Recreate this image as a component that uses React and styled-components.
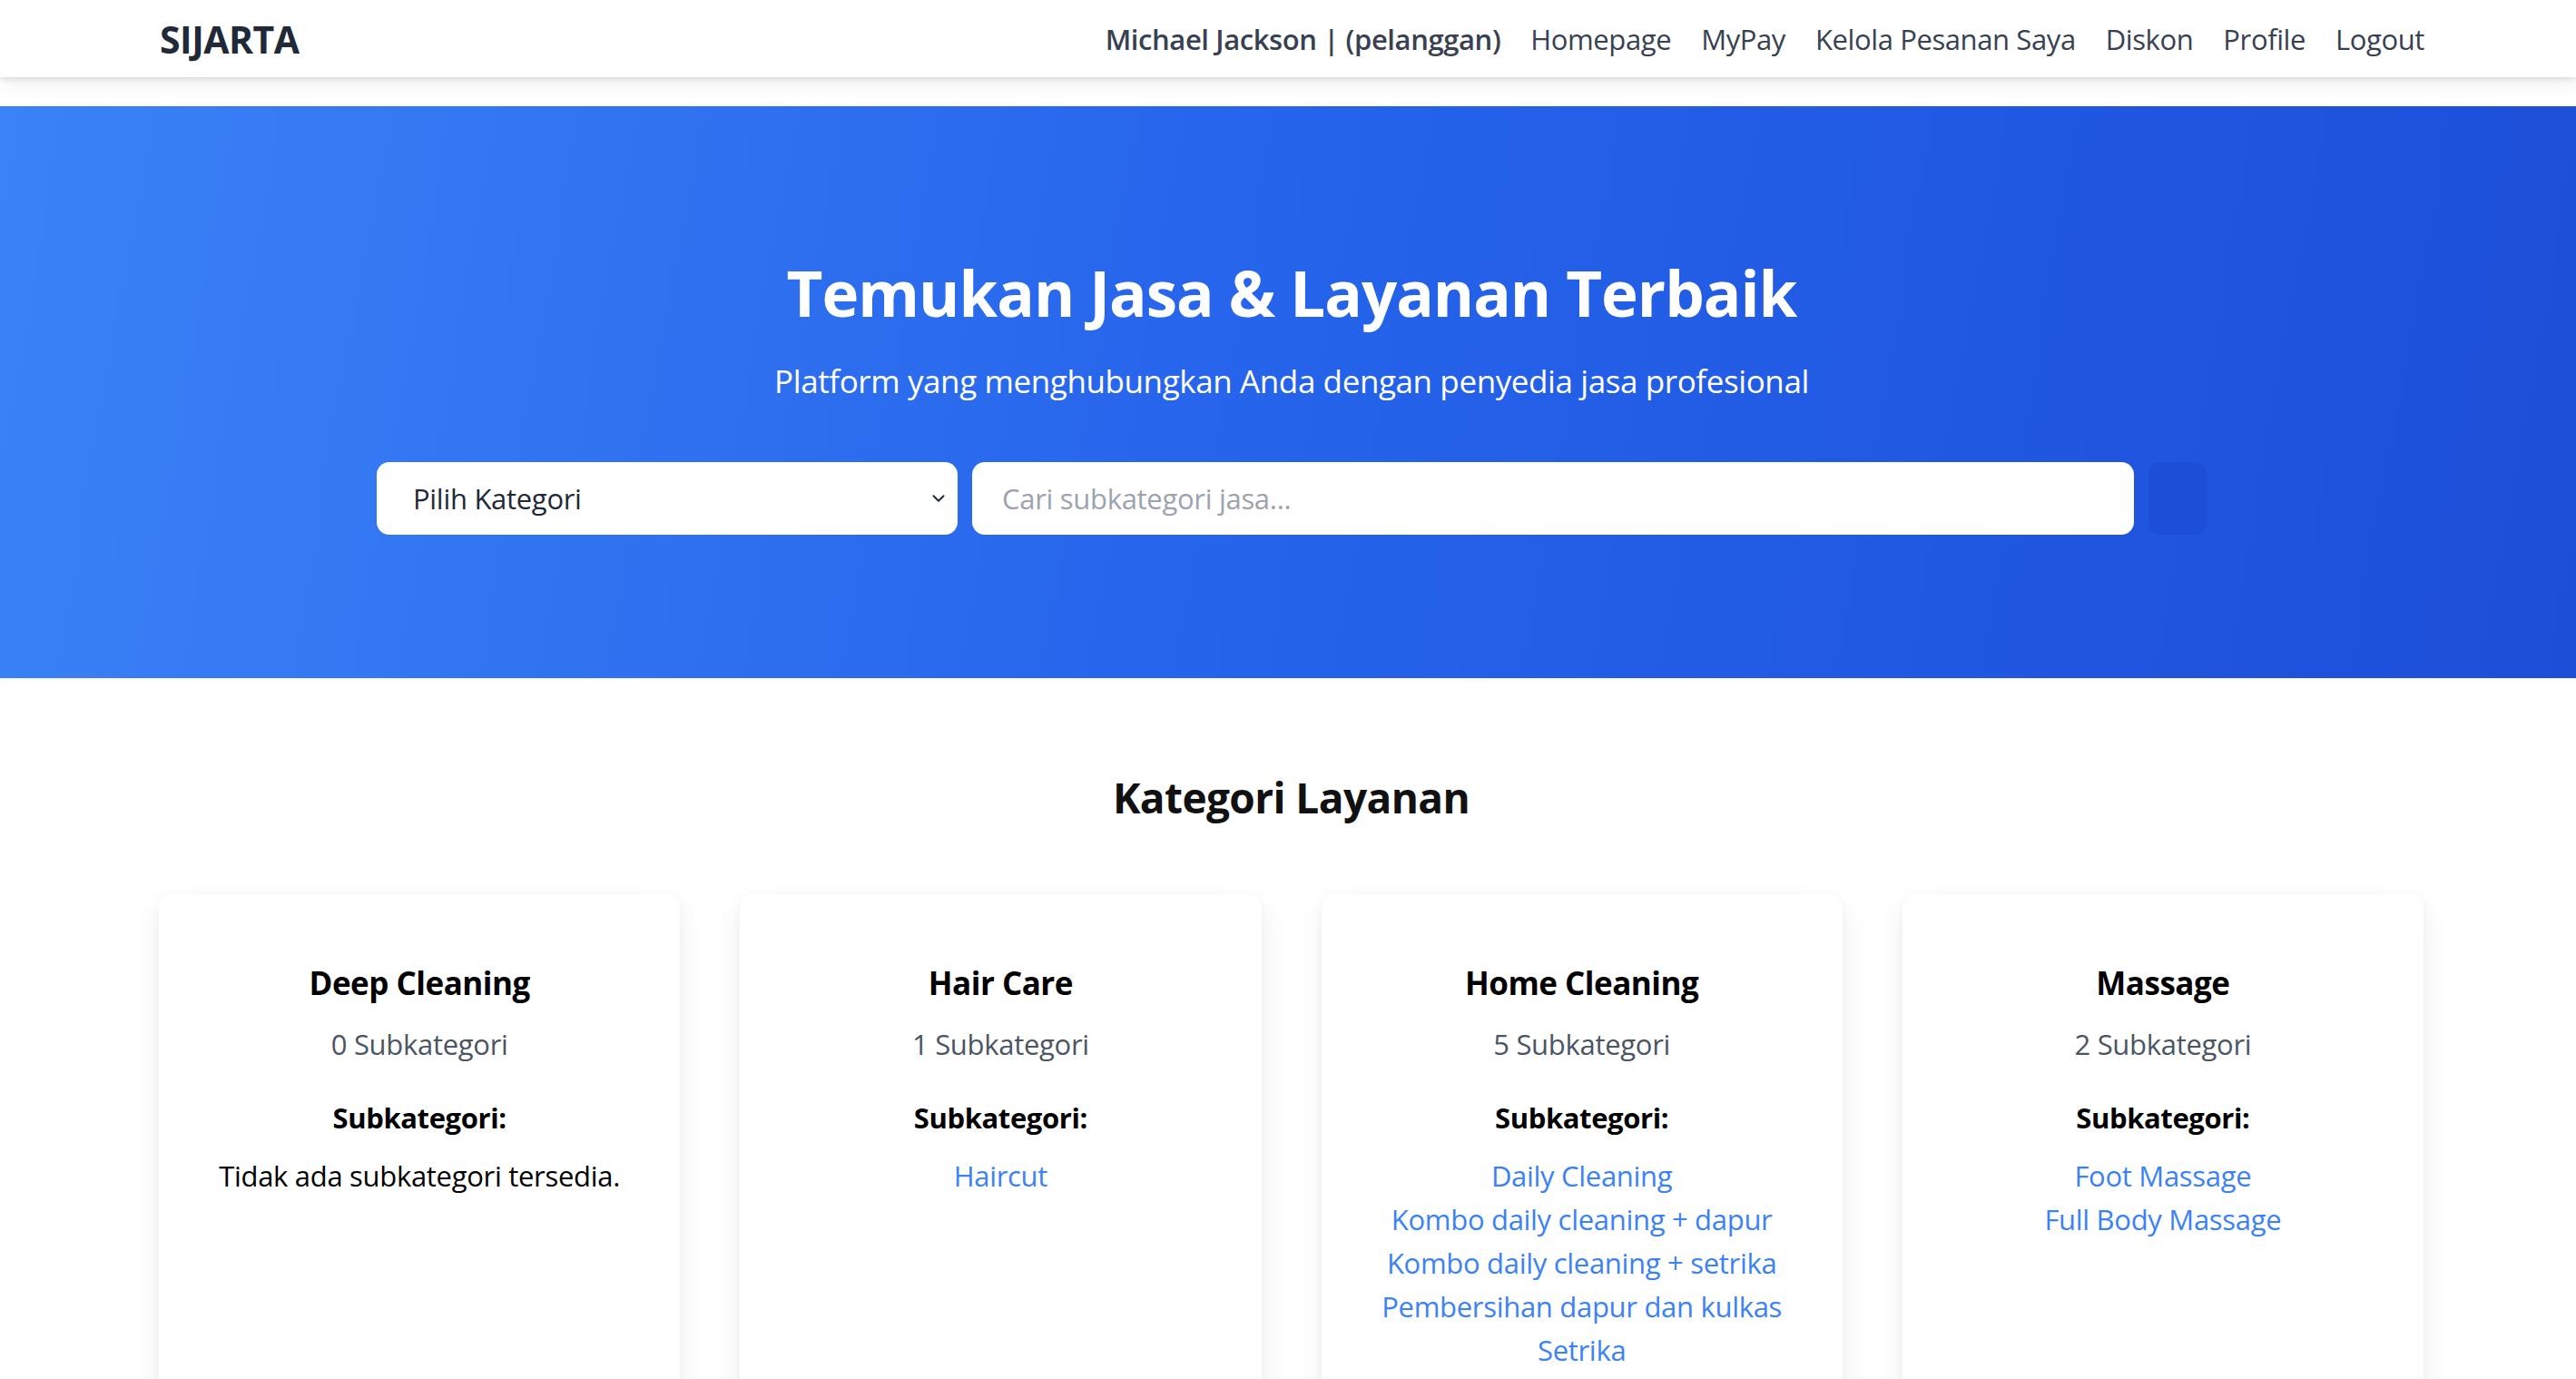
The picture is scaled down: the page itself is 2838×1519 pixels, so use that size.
import styled, { createGlobalStyle } from "styled-components";
import { ChevronDown } from "lucide-react";

const GlobalStyle = createGlobalStyle`
  body {
    margin: 0;
    background: #ffffff;
    font-family: "Open Sans", "Noto Sans", Arial, sans-serif;
  }
  * { box-sizing: border-box; }
`;

const Nav = styled.nav`
  height: 85px;
  background: #ffffff;
  box-shadow: 0 3px 6px rgba(0, 0, 0, 0.1), 0 10px 24px rgba(0, 0, 0, 0.05);
`;

const NavInner = styled.div`
  height: 100%;
  display: flex;
  align-items: center;
  justify-content: space-between;
  padding: 0 167px 0 176px;
`;

const Logo = styled.div`
  font-size: 41px;
  font-weight: 700;
  color: #1f2937;
  letter-spacing: -0.5px;
`;

const NavLinks = styled.div`
  display: flex;
  align-items: center;
  gap: 33px;
`;

const NavLink = styled.a`
  font-size: 31px;
  color: #374151;
  font-weight: ${(p) => (p.$strong ? 600 : 400)};
  letter-spacing: -0.4px;
  cursor: pointer;
`;

const Hero = styled.section`
  margin-top: 32px;
  height: 630px;
  background: linear-gradient(100deg, #3b82f6 0%, #2563eb 50%, #1d4ed8 100%);
  display: flex;
  flex-direction: column;
  align-items: center;
  padding: 163px 0 0 8px;
  color: #ffffff;
`;

const HeroTitle = styled.h1`
  margin: 0;
  font-size: 69px;
  line-height: 84px;
  font-weight: 700;
  letter-spacing: -1px;
`;

const HeroSub = styled.p`
  margin: 29px 0 0;
  font-size: 35px;
  line-height: 54px;
  letter-spacing: -0.4px;
`;

const SearchRow = styled.div`
  margin-top: 62px;
  width: 2016px;
  display: flex;
  gap: 16px;
  height: 80px;
`;

const SelectWrap = styled.div`
  position: relative;
  width: 640px;
  flex-shrink: 0;
`;

const Select = styled.select`
  appearance: none;
  width: 100%;
  height: 100%;
  border: none;
  border-radius: 14px;
  background: #ffffff;
  padding: 0 40px;
  font-family: inherit;
  font-size: 31px;
  color: #1f2937;
  letter-spacing: -0.3px;
  outline: none;
`;

const Chevron = styled.span`
  position: absolute;
  right: 10px;
  top: 50%;
  transform: translateY(-50%);
  display: flex;
  color: #1f2937;
  pointer-events: none;
`;

const SearchInput = styled.input`
  flex: 1;
  height: 100%;
  border: none;
  border-radius: 14px;
  background: #ffffff;
  padding: 0 33px;
  font-family: inherit;
  font-size: 31px;
  letter-spacing: -0.3px;
  outline: none;
  &::placeholder {
    color: #9ca3af;
  }
`;

const SearchButton = styled.button`
  width: 64px;
  height: 100%;
  border: none;
  border-radius: 14px;
  background: #1d4ed8;
  flex-shrink: 0;
`;

const Section = styled.section`
  padding: 103px 168px 0 175px;
`;

const SectionTitle = styled.h2`
  margin: 0;
  text-align: center;
  font-size: 46px;
  line-height: 57px;
  font-weight: 700;
  color: #111111;
  letter-spacing: -0.6px;
`;

const Grid = styled.div`
  margin-top: 78px;
  display: grid;
  grid-template-columns: repeat(4, 1fr);
  gap: 66px;
`;

const Card = styled.div`
  background: #ffffff;
  border-radius: 16px;
  box-shadow: 0 10px 30px rgba(0, 0, 0, 0.07), 0 2px 8px rgba(0, 0, 0, 0.03);
  padding: 71px 24px 60px;
  min-height: 620px;
  text-align: center;
`;

const CardTitle = styled.h3`
  margin: 0;
  font-size: 35px;
  line-height: 53px;
  font-weight: 700;
  color: #000000;
  letter-spacing: -0.5px;
`;

const Count = styled.p`
  margin: 17px 0 0;
  font-size: 31px;
  line-height: 49px;
  color: #4b5563;
  letter-spacing: -0.3px;
`;

const SubHead = styled.p`
  margin: 32px 0 0;
  font-size: 31px;
  line-height: 49px;
  font-weight: 700;
  color: #000000;
  letter-spacing: -0.4px;
`;

const SubList = styled.ul`
  list-style: none;
  margin: 15px 0 0;
  padding: 0;
`;

const SubItem = styled.li`
  font-size: 31px;
  line-height: 48px;
  letter-spacing: -0.3px;
  color: ${(p) => (p.$empty ? "#000000" : "#3b82f6")};
`;

const categories = [
  { name: "Deep Cleaning", subs: [] },
  { name: "Hair Care", subs: ["Haircut"] },
  {
    name: "Home Cleaning",
    subs: [
      "Daily Cleaning",
      "Kombo daily cleaning + dapur",
      "Kombo daily cleaning + setrika",
      "Pembersihan dapur dan kulkas",
      "Setrika",
    ],
  },
  { name: "Massage", subs: ["Foot Massage", "Full Body Massage"] },
];

const navItems = ["Homepage", "MyPay", "Kelola Pesanan Saya", "Diskon", "Profile", "Logout"];

const App = () => {
  return (
    <>
      <GlobalStyle />
      <Nav>
        <NavInner>
          <Logo>SIJARTA</Logo>
          <NavLinks>
            <NavLink $strong>Michael Jackson | (pelanggan)</NavLink>
            {navItems.map((item) => (
              <NavLink key={item}>{item}</NavLink>
            ))}
          </NavLinks>
        </NavInner>
      </Nav>

      <Hero>
        <HeroTitle>Temukan Jasa &amp; Layanan Terbaik</HeroTitle>
        <HeroSub>Platform yang menghubungkan Anda dengan penyedia jasa profesional</HeroSub>
        <SearchRow>
          <SelectWrap>
            <Select defaultValue="">
              <option value="">Pilih Kategori</option>
              {categories.map((c) => (
                <option key={c.name}>{c.name}</option>
              ))}
            </Select>
            <Chevron>
              <ChevronDown size={22} strokeWidth={2.2} />
            </Chevron>
          </SelectWrap>
          <SearchInput placeholder="Cari subkategori jasa..." />
          <SearchButton aria-label="Cari" />
        </SearchRow>
      </Hero>

      <Section>
        <SectionTitle>Kategori Layanan</SectionTitle>
        <Grid>
          {categories.map((cat) => (
            <Card key={cat.name}>
              <CardTitle>{cat.name}</CardTitle>
              <Count>{cat.subs.length} Subkategori</Count>
              <SubHead>Subkategori:</SubHead>
              <SubList>
                {cat.subs.length === 0 ? (
                  <SubItem $empty>Tidak ada subkategori tersedia.</SubItem>
                ) : (
                  cat.subs.map((s) => <SubItem key={s}>{s}</SubItem>)
                )}
              </SubList>
            </Card>
          ))}
        </Grid>
      </Section>
    </>
  );
};

export default App;
